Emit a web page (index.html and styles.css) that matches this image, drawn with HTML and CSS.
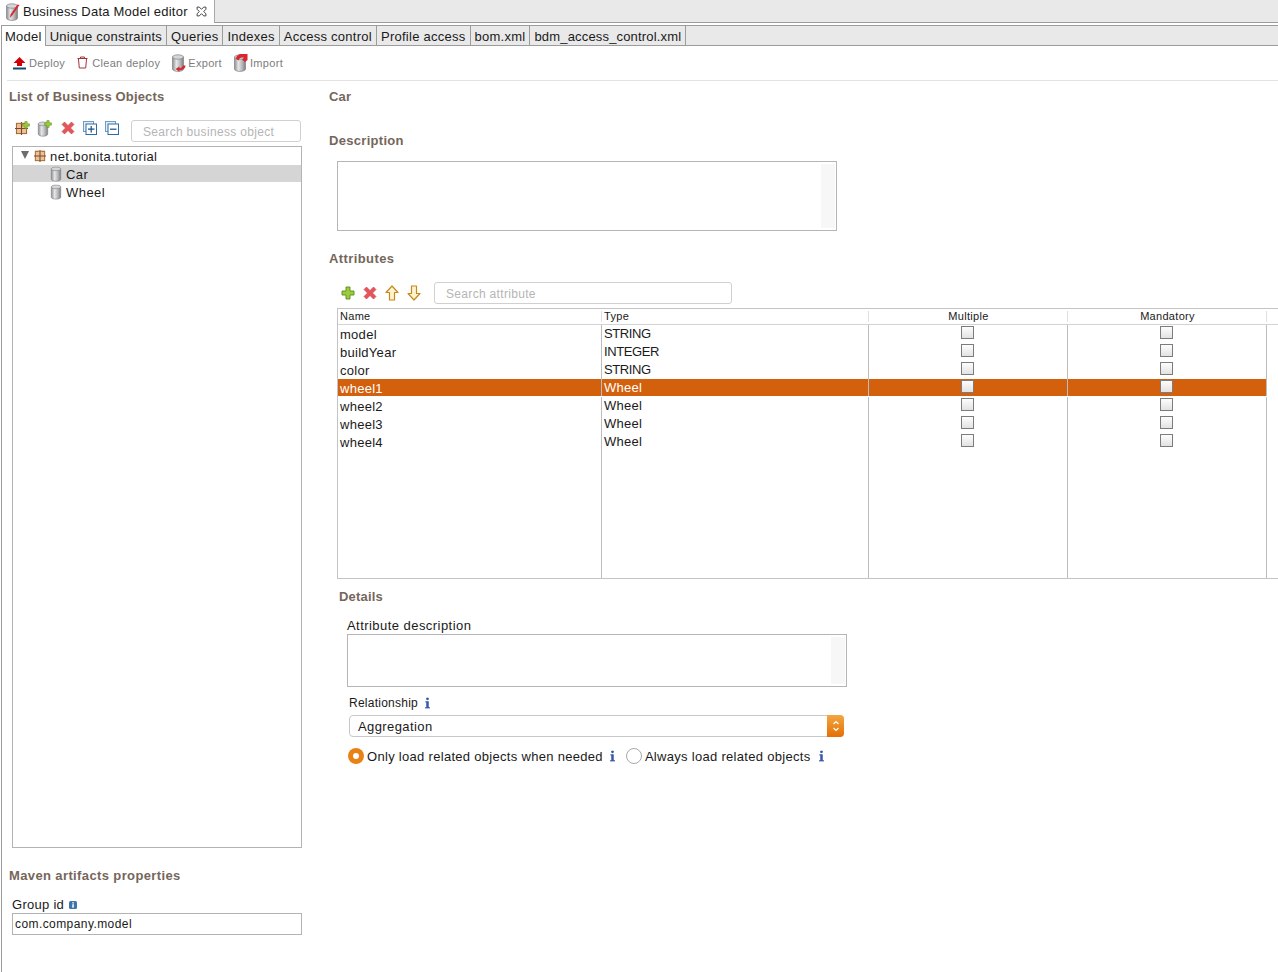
FILE: index.html
```html
<!DOCTYPE html>
<html lang="en">
<head>
<meta charset="utf-8">
<title>Business Data Model editor</title>
<link rel="stylesheet" href="styles.css">
</head>
<body>
<svg class="defs" width="0" height="0" aria-hidden="true">
  <defs>
    <linearGradient id="cyl" x1="0" x2="1" y1="0" y2="0">
      <stop offset="0" stop-color="#8a8d90"/><stop offset=".35" stop-color="#e6e7e8"/><stop offset=".7" stop-color="#b5b7b9"/><stop offset="1" stop-color="#7b7e81"/>
    </linearGradient>
    <symbol id="cylinder" viewBox="0 0 14 18">
      <path d="M1.500 3v12c0 1.300 2.500 2.400 5.500 2.400s5.500-1.100 5.500-2.400V3z" fill="url(#cyl)" stroke="#7f8285" stroke-width=".7"/>
      <ellipse cx="7" cy="3" rx="5.500" ry="2.200" fill="#d5d6d8" stroke="#7f8285" stroke-width=".7"/>
    </symbol>
    <symbol id="package" viewBox="0 0 14 14">
      <rect x="1.500" y="1.500" width="11" height="11" fill="#ecc19a" stroke="#9a5a28"/>
      <path d="M7 0v14M0 7h14" stroke="#7c4a22" stroke-width="1.200"/>
      <path d="M1.500 1.500h11" stroke="#b5763e"/>
    </symbol>
    <symbol id="plus" viewBox="0 0 14 14">
      <path d="M5 1h4v4h4v4H9v4H5V9H1V5h4z" fill="#9ccb3c" stroke="#5f8a1e" stroke-width=".9"/>
    </symbol>
    <symbol id="cross" viewBox="0 0 14 14">
      <path d="M1 3.500L3.500 1 7 4.500 10.500 1 13 3.500 9.500 7 13 10.500 10.500 13 7 9.500 3.500 13 1 10.500 4.500 7z" fill="#e4565e" stroke="#cf3c44" stroke-width=".6"/>
    </symbol>
    <symbol id="arrow-up" viewBox="0 0 14 16">
      <path d="M7 1l6 6.500H9.500V15h-5V7.500H1z" fill="#fdf4cf" stroke="#c48a1a" stroke-width="1.200" stroke-linejoin="round"/>
    </symbol>
    <symbol id="info" viewBox="0 0 6 14">
      <circle cx="3" cy="2" r="1.700" fill="#3558a8"/>
      <path d="M.5 5h4v7H6v1.500H0V12h1.500V6.500H.5z" fill="#3558a8"/>
    </symbol>
  </defs>
</svg>

<header class="editor-tabs">
  <div class="editor-tab">
    <svg class="tab-icon" viewBox="0 0 16 18" width="16" height="18"><use href="#cylinder" width="14" height="18"/><path d="M14.500 2L7.500 12l-2.500 3 .5-3.500L12.500 1.500z" fill="#d8272f"/></svg>
    <span>Business Data Model editor</span>
    <svg class="close-icon" viewBox="0 0 10 10" width="11" height="11"><path d="M1 1h2l2 2 2-2h2v2L7 5l2 2v2H7L5 7 3 9H1V7l2-2-2-2z" fill="#fff" stroke="#444" stroke-width=".9"/></svg>
  </div>
</header>

<nav class="sub-tabs">
  <span class="sub-tab active">Model</span>
  <span class="sub-tab">Unique constraints</span>
  <span class="sub-tab">Queries</span>
  <span class="sub-tab">Indexes</span>
  <span class="sub-tab">Access control</span>
  <span class="sub-tab">Profile access</span>
  <span class="sub-tab">bom.xml</span>
  <span class="sub-tab sub-tab-long">bdm_access_control.xml</span>
</nav>

<main class="page">
  <div class="toolbar">
    <span class="tool tool-deploy">
      <svg viewBox="0 0 13 14" width="13" height="14"><path d="M6.500 1L12.500 7H9v3H4V7H.5z" fill="#d3000a"/><rect x="0" y="11.500" width="13" height="2" fill="#0f4a6e"/></svg>Deploy</span>
    <span class="tool tool-clean">
      <svg viewBox="0 0 11 13" width="11" height="13"><path d="M1.500 3l.8 9h6.400l.8-9M.5 2.500h10M3.500 2.500V1h4v1.500" fill="#fff" stroke="#a2343a" stroke-width="1"/></svg>Clean deploy</span>
    <span class="tool tool-export">
      <svg viewBox="0 0 16 18" width="16" height="18"><use href="#cylinder" width="14" height="18"/><path d="M14.500 11.500c0 3-2.500 4.500-6 4.500v1.800L4.500 15 8.500 12.500v1.700c2 0 3-1 3.300-2.700z" fill="#d8272f"/></svg>Export</span>
    <span class="tool tool-import">
      <svg viewBox="0 0 16 18" width="16" height="18"><use href="#cylinder" width="14" height="18"/><path d="M3 5c0-3 2.500-5 6-5h5.500v6L12 8 9 5.500l2-1.500c-2-1-5-.5-5 2.500z" fill="#d8272f"/></svg>Import</span>
  </div>

  <div class="columns">
    <aside class="left">
      <h2 class="heading list-heading">List of Business Objects</h2>
      <div class="left-tools">
        <svg class="ticon-a" viewBox="0 0 15 15" width="15" height="15"><use href="#package" y="1" width="13" height="13"/><use href="#plus" x="7" y="0" width="8" height="8"/></svg>
        <svg class="ticon-b" viewBox="0 0 15 17" width="15" height="17"><use href="#cylinder" width="12" height="16" y="1"/><use href="#plus" x="7" y="0" width="8" height="8"/></svg>
        <svg class="ticon-c" viewBox="0 0 14 14" width="14" height="14"><use href="#cross"/></svg>
        <svg class="ticon-d" viewBox="0 0 14 14" width="14" height="14"><rect x=".5" y=".5" width="10" height="10" fill="#e4eef7" stroke="#6f9bc4"/><rect x="3" y="3" width="10.500" height="10.500" fill="#fff" stroke="#2a6ca8"/><path d="M8.200 5v6.500M5 8.200h6.500" stroke="#174f85" stroke-width="1.200"/></svg>
        <svg class="ticon-e" viewBox="0 0 14 14" width="14" height="14"><rect x=".5" y=".5" width="10" height="10" fill="#e4eef7" stroke="#6f9bc4"/><rect x="3" y="3" width="10.500" height="10.500" fill="#fff" stroke="#2a6ca8"/><path d="M5 8.200h6.500" stroke="#174f85" stroke-width="1.200"/></svg>
        <div class="search search-left">Search business object</div>
      </div>
      <div class="tree">
        <div class="tree-row tree-root">
          <span class="twisty"></span>
          <svg viewBox="0 0 14 14" width="12" height="12"><use href="#package"/></svg>
          <span>net.bonita.tutorial</span>
        </div>
        <div class="tree-row tree-child selected">
          <svg viewBox="0 0 14 18" width="12" height="16"><use href="#cylinder"/></svg>
          <span>Car</span>
        </div>
        <div class="tree-row tree-child">
          <svg viewBox="0 0 14 18" width="12" height="16"><use href="#cylinder"/></svg>
          <span>Wheel</span>
        </div>
      </div>
      <h2 class="heading maven">Maven artifacts properties</h2>
      <div class="group-label">Group id
        <svg viewBox="0 0 8 8" width="8" height="8"><rect width="8" height="8" rx="1.500" fill="#3f73ad"/><rect x="3.300" y="1.200" width="1.500" height="1.300" fill="#fff"/><rect x="3.300" y="3.200" width="1.500" height="3.500" fill="#fff"/></svg>
      </div>
      <div class="text-input">com.company.model</div>
    </aside>

    <section class="right">
      <h2 class="heading">Car</h2>
      <h2 class="heading desc-heading">Description</h2>
      <div class="textarea desc-area"><div class="scroll"></div></div>
      <h2 class="heading attr-heading">Attributes</h2>
      <div class="attr-tools">
        <svg class="aicon" viewBox="0 0 14 14" width="14" height="14"><use href="#plus"/></svg>
        <svg class="aicon" viewBox="0 0 14 14" width="14" height="14"><use href="#cross"/></svg>
        <svg class="aicon" viewBox="0 0 14 16" width="14" height="16"><use href="#arrow-up"/></svg>
        <svg class="aicon flip" viewBox="0 0 14 16" width="14" height="16"><use href="#arrow-up"/></svg>
        <div class="search search-attr">Search attribute</div>
      </div>

      <div class="table">
        <div class="thead">
          <div class="th">Name</div><div class="th">Type</div><div class="th center">Multiple</div><div class="th center">Mandatory</div>
        </div>
        <div class="tr"><div class="td">model</div><div class="td up caps">STRING</div><div class="td center"><i class="check"></i></div><div class="td center"><i class="check"></i></div></div>
        <div class="tr"><div class="td">buildYear</div><div class="td up caps">INTEGER</div><div class="td center"><i class="check"></i></div><div class="td center"><i class="check"></i></div></div>
        <div class="tr"><div class="td">color</div><div class="td up caps">STRING</div><div class="td center"><i class="check"></i></div><div class="td center"><i class="check"></i></div></div>
        <div class="tr selected"><div class="td">wheel1</div><div class="td up">Wheel</div><div class="td center"><i class="check"></i></div><div class="td center"><i class="check"></i></div></div>
        <div class="tr"><div class="td">wheel2</div><div class="td up">Wheel</div><div class="td center"><i class="check"></i></div><div class="td center"><i class="check"></i></div></div>
        <div class="tr"><div class="td">wheel3</div><div class="td up">Wheel</div><div class="td center"><i class="check"></i></div><div class="td center"><i class="check"></i></div></div>
        <div class="tr"><div class="td">wheel4</div><div class="td up">Wheel</div><div class="td center"><i class="check"></i></div><div class="td center"><i class="check"></i></div></div>
        <div class="tr filler"><div class="td"></div><div class="td"></div><div class="td"></div><div class="td"></div></div>
      </div>

      <div class="details">
        <h2 class="heading">Details</h2>
        <div class="details-body">
          <div class="field-label">Attribute description</div>
          <div class="textarea detail-area"><div class="scroll"></div></div>
          <div class="rel-label">Relationship
            <svg class="info" viewBox="0 0 6 14" width="5" height="12"><use href="#info"/></svg>
          </div>
          <div class="select">
            <span>Aggregation</span>
            <span class="select-btn"><svg viewBox="0 0 8 14" width="8" height="14"><path d="M1.500 5L4 2.500 6.500 5M1.500 9L4 11.500 6.500 9" fill="none" stroke="#fff" stroke-width="1.200"/></svg></span>
          </div>
          <div class="radios">
            <i class="radio on"></i><span class="radio-text">Only load related objects when needed</span>
            <svg class="info info-a" viewBox="0 0 6 14" width="5" height="12"><use href="#info"/></svg>
            <i class="radio off"></i><span class="radio-text">Always load related objects</span>
            <svg class="info info-b" viewBox="0 0 6 14" width="5" height="12"><use href="#info"/></svg>
          </div>
        </div>
      </div>
    </section>
  </div>
</main>
</body>
</html>
```
FILE: styles.css
```css
* { box-sizing: border-box; }
html, body { margin: 0; height: 972px; overflow: hidden; }
body {
  width: 1278px;
  background: #fff;
  color: #1a1a1a;
  font-family: "Liberation Sans", Arial, sans-serif;
  font-size: 13px;
  line-height: 16px;
}
.defs { display: block; height: 0; }

.editor-tabs {
  height: 23px;
  background: #e9e9e9;
  border-bottom: 1px solid #9c9c9c;
  display: flex;
}
.editor-tab {
  width: 215px;
  height: 23px;
  background: #fff;
  border-right: 1px solid #a8a8a8;
  display: flex;
  align-items: center;
  padding-left: 5px;
}
.tab-icon { flex: none; margin: 0 2px 0 0; }
.editor-tab span { letter-spacing: .22px; }
.close-icon { margin-left: 8px; }

.sub-tabs {
  margin: 2px 0 0 1px;
  height: 21px;
  background: #e9e9e9;
  border-top: 1px solid #9c9c9c;
  border-bottom: 1px solid #9c9c9c;
  border-left: 1px solid #9c9c9c;
  display: flex;
  line-height: 21px;
}
.sub-tab {
  padding: 0 4px;
  border-right: 1px solid #9c9c9c;
  letter-spacing: .26px;
  white-space: nowrap;
}
.sub-tab-long { letter-spacing: .17px; }
.sub-tab.active {
  background: #fff;
  height: 20px;
  padding: 0 3px;
}

.page {
  margin-left: 1px;
  border-left: 1px solid #9c9c9c;
  height: 927px;
}
.toolbar {
  margin-left: 5px;
  height: 35px;
  border-bottom: 1px solid #e3e3e3;
  display: flex;
  align-items: center;
  color: #7d7d7d;
  font-size: 11px;
  letter-spacing: .32px;
  padding-bottom: 1px;
}
.tool { display: flex; align-items: center; }
.tool svg { flex: none; }
.tool-deploy { margin-left: 6px; }
.tool-deploy svg { margin-right: 3px; }
.tool-clean { margin-left: 12px; }
.tool-clean svg { margin-right: 4px; }
.tool-export { margin-left: 11px; }
.tool-export svg { margin-right: 1px; }
.tool-import { margin-left: 11px; }
.tool-import svg { margin-right: 1px; }

.columns { display: flex; }
.left { width: 300px; flex: none; padding: 8px 0 0 10px; }
.right { flex: 1; min-width: 0; padding: 8px 0 0 27px; }

.heading {
  margin: 0;
  font-size: 13px;
  line-height: 16px;
  font-weight: 700;
  color: #75665a;
  letter-spacing: .2px;
}
.left .heading { margin-left: -3px; }
.list-heading { letter-spacing: .15px; }

.left-tools {
  display: flex;
  align-items: center;
  height: 22px;
  margin: 15px 0 0 0;
}
.left-tools svg { flex: none; margin-bottom: 6px; }
.ticon-a { margin-left: 3px; }
.ticon-b { margin-left: 7px; }
.ticon-c { margin-left: 9px; }
.ticon-d { margin-left: 8px; }
.ticon-e { margin-left: 8px; }
.search {
  height: 22px;
  border: 1px solid #d0d0d0;
  border-radius: 3px;
  color: #b5b5b5;
  font-size: 12px;
  line-height: 22px;
  padding-left: 11px;
  letter-spacing: .32px;
  background: #fff;
}
.search-left { width: 170px; margin-left: 12px; }

.tree {
  width: 290px;
  height: 702px;
  margin-top: 4px;
  border: 1px solid #b3b3b3;
}
.tree-row {
  height: 18px;
  display: flex;
  align-items: center;
  letter-spacing: .45px;
}
.tree-root { padding-left: 8px; }
.twisty {
  width: 0; height: 0;
  border-left: 4.500px solid transparent;
  border-right: 4.500px solid transparent;
  border-top: 8px solid #6d6d6d;
  margin: 0 5px 2px 0;
}
.tree-root span:last-child { margin-left: 4px; padding-top: 2px; letter-spacing: .4px; }
.tree-child { padding-left: 37px; }
.tree-child span { margin-left: 4px; padding-top: 2px; }
.tree-row.selected { background: #d5d5d5; height: 17px; margin-bottom: 1px; }

.maven { margin-top: 20px; letter-spacing: .38px; }
.group-label { margin-top: 13px; height: 16px; letter-spacing: .28px; }
.group-label svg { margin-left: 1px; }
.text-input {
  width: 290px;
  height: 22px;
  border: 1px solid #b3b3b3;
  padding-left: 2px;
  line-height: 20px;
  font-size: 12px;
  letter-spacing: .42px;
}

.desc-heading { margin-top: 28px; letter-spacing: .3px; }
.textarea {
  border: 1px solid #b5b5b5;
  display: flex;
  justify-content: flex-end;
  padding: 2px 1px;
}
.scroll { width: 14px; background: #f7f7f7; }
.desc-area { width: 500px; height: 70px; margin: 12px 0 0 8px; }
.attr-heading { margin-top: 20px; letter-spacing: .4px; }

.attr-tools {
  display: flex;
  align-items: center;
  height: 22px;
  margin: 15px 0 0 12px;
}
.aicon { flex: none; margin-right: 8px; }
.aicon.flip { transform: scaleY(-1); }
.search-attr { width: 298px; margin-left: 5px; }

.table {
  margin: 4px 0 0 8px;
  height: 271px;
  border: 1px solid #c4c4c4;
  border-right: 0;
  display: flex;
  flex-direction: column;
  width: 941px;
}
.thead, .tr {
  display: grid;
  grid-template-columns: 264px 267px 199px 199px;
}
.thead {
  height: 16px;
  border-bottom: 1px solid #d4d4d4;
  font-size: 11px;
  line-height: 15px;
  letter-spacing: .3px;
}
.th { padding-left: 2px; position: relative; }
.th::after {
  content: "";
  position: absolute;
  right: 0; top: 2px; bottom: 2px;
  width: 1px;
  background: #e0e0e0;
}
.center { text-align: center; padding-left: 0; }
.tr { height: 18px; }
.td {
  border-right: 1px solid #bdbdbd;
  padding-left: 2px;
  line-height: 20px;
  letter-spacing: .28px;
}
.td.up { line-height: 18px; }
.td.caps { letter-spacing: -.4px; }
.td.center { padding-left: 0; display: flex; justify-content: center; align-items: flex-start; }
.tr.selected { color: #fff; }
.tr.selected .td { background: #d2600c; height: 17px; }
.tr.filler { flex: 1; }
.check {
  display: block;
  width: 13px;
  height: 13px;
  border: 1px solid #7c7c7c;
  background: linear-gradient(#fdfdfd, #e2e2e2);
  margin-top: 1px;
  margin-right: 2px;
}

.details { padding: 10px 0 0 10px; }
.details-body { padding: 13px 0 0 8px; }
.field-label { height: 16px; letter-spacing: .45px; }
.detail-area { width: 500px; height: 53px; }
.rel-label {
  margin: 8px 0 0 2px;
  font-size: 12px;
  height: 16px;
  letter-spacing: .25px;
  display: flex;
  align-items: center;
}
.info { flex: none; margin-left: 7px; }
.select {
  width: 495px;
  height: 22px;
  margin: 4px 0 0 2px;
  border: 1px solid #c8c8c8;
  border-radius: 4px;
  padding-left: 8px;
  display: flex;
  justify-content: space-between;
  line-height: 21px;
  letter-spacing: .4px;
}
.select-btn {
  width: 17px;
  margin: -1px -1px -1px 0;
  border-radius: 0 4px 4px 0;
  background: linear-gradient(#f3a642, #e36f04);
  display: flex;
  align-items: center;
  justify-content: center;
}
.radios {
  display: flex;
  align-items: center;
  margin: 10px 0 0 1px;
  height: 18px;
  letter-spacing: .3px;
}
.radio {
  display: block;
  flex: none;
  width: 16px;
  height: 16px;
  border-radius: 50%;
}
.radio.on { background: #ea8115; position: relative; }
.radio.on::after {
  content: "";
  position: absolute;
  left: 5px; top: 5px;
  width: 6px; height: 6px;
  border-radius: 50%;
  background: #fff;
}
.radio.off { border: 1px solid #a8a8a8; background: #fff; }
.radio-text { margin-left: 3px; padding-top: 2px; white-space: nowrap; }
.info-a { margin: 0 11px 0 7px; }
.info-b { margin-left: 8px; }
```
